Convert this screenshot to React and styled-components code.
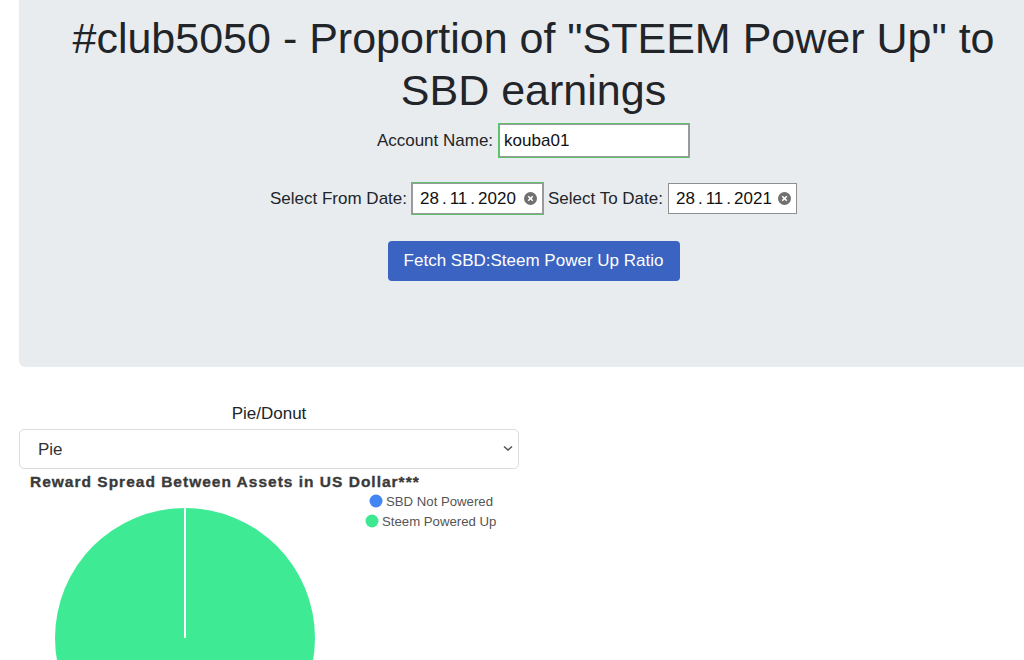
import React, { useState } from 'react';
import styled, { createGlobalStyle } from 'styled-components';

const GlobalStyle = createGlobalStyle`
  html, body {
    margin: 0;
    padding: 0;
    background: #fff;
    overflow: hidden;
  }
  body {
    font-family: "Liberation Sans", Arial, sans-serif;
    color: #212529;
  }
`;

const Root = styled.div`
  padding-left: 19px;
  width: 1024px;
  box-sizing: border-box;
  overflow: hidden;
`;

const Jumbotron = styled.div`
  width: 1029px;
  height: 367px;
  box-sizing: border-box;
  background: #e9ecef;
  border-radius: 0 0 6px 6px;
  padding-top: 12px;
  display: flex;
  flex-direction: column;
  align-items: center;
`;

const Title = styled.h1`
  margin: 0;
  width: 960px;
  font-size: 43px;
  font-weight: 400;
  line-height: 52px;
  text-align: center;
`;

const FormRow = styled.div`
  display: flex;
  align-items: center;
  gap: 5px;
  font-size: 17px;
  white-space: nowrap;
  margin-top: ${p => p.top}px;
`;

const TextInput = styled.input`
  width: 190px;
  height: 33px;
  box-sizing: border-box;
  border: 1px solid #9a9a9a;
  box-shadow: 0 0 0 1px #5cc36c;
  margin: 0 1px;
  padding: 0 4px;
  font-family: inherit;
  font-size: 17px;
  color: #111;
  outline: none;
`;

const DateBox = styled.div`
  width: ${p => p.w}px;
  height: 31px;
  box-sizing: border-box;
  background: #fff;
  border: 1px solid ${p => (p.active ? '#9a9a9a' : '#8f8f8f')};
  box-shadow: ${p => (p.active ? '0 0 0 1px #5cc36c' : 'none')};
  display: flex;
  align-items: center;
  justify-content: space-between;
  padding: 0 5px 0 7px;
  font-size: 17px;
  color: #111;
`;

const DateParts = styled.span`
  display: flex;
  gap: 3px;
`;

const ClearIcon = () => (
  <svg width="13" height="13" viewBox="0 0 13 13">
    <circle cx="6.5" cy="6.5" r="6.5" fill="#707070" />
    <path d="M4.2 4.2 L8.8 8.8 M8.8 4.2 L4.2 8.8" stroke="#fff" strokeWidth="1.6" />
  </svg>
);

const DateField = ({ value, w, active }) => (
  <DateBox w={w} active={active}>
    <DateParts>
      {value.split('.').map((part, i) => (
        <React.Fragment key={i}>
          {i > 0 && <span>.</span>}
          <span>{part}</span>
        </React.Fragment>
      ))}
    </DateParts>
    <ClearIcon />
  </DateBox>
);

const FetchButton = styled.button`
  margin-top: 27px;
  width: 292px;
  height: 40px;
  border: none;
  border-radius: 4px;
  background: #3a63c2;
  color: #fff;
  font-family: inherit;
  font-size: 17px;
  cursor: pointer;
`;

const ChartSection = styled.div`
  width: 500px;
  margin-top: 37px;
`;

const SelectLabel = styled.div`
  text-align: center;
  font-size: 17px;
  line-height: 20px;
`;

const SelectWrap = styled.div`
  position: relative;
  margin-top: 5px;
`;

const Select = styled.select`
  width: 500px;
  height: 40px;
  box-sizing: border-box;
  border: 1px solid #d9dce0;
  border-radius: 5px;
  background: #fff;
  appearance: none;
  padding: 0 18px;
  font-family: inherit;
  font-size: 17px;
  color: #333;
  outline: none;
`;

const Chevron = styled.svg`
  position: absolute;
  right: 6px;
  top: 16px;
  pointer-events: none;
`;

const ChartSvg = styled.svg`
  display: block;
  margin-top: 3px;
`;

const legend = [
  { label: 'SBD Not Powered', color: '#4285f4', x: 357, y: 29 },
  { label: 'Steem Powered Up', color: '#3ee893', x: 353, y: 49 },
];

export default function App() {
  const [account, setAccount] = useState('kouba01');
  const [chartType, setChartType] = useState('Pie');

  return (
    <Root>
      <GlobalStyle />
      <Jumbotron>
        <Title>#club5050 - Proportion of "STEEM Power Up" to SBD earnings</Title>
        <FormRow top={8}>
          Account Name:
          <TextInput value={account} onChange={e => setAccount(e.target.value)} />
        </FormRow>
        <FormRow top={26}>
          Select From Date:
          <DateField value="28.11.2020" w={131} active />
          Select To Date:
          <DateField value="28.11.2021" w={129} />
        </FormRow>
        <FetchButton>Fetch SBD:Steem Power Up Ratio</FetchButton>
      </Jumbotron>

      <ChartSection>
        <SelectLabel>Pie/Donut</SelectLabel>
        <SelectWrap>
          <Select value={chartType} onChange={e => setChartType(e.target.value)}>
            <option>Pie</option>
            <option>Donut</option>
          </Select>
          <Chevron width="10" height="7" viewBox="0 0 10 7">
            <path d="M1 1.5 L5 5 L9 1.5" stroke="#555" strokeWidth="1.6" fill="none" />
          </Chevron>
        </SelectWrap>
        <ChartSvg width="500" height="200" viewBox="0 0 500 200">
          <text
            x="11"
            y="15"
            fontFamily="Liberation Sans, Arial, sans-serif"
            fontSize="15.5"
            fontWeight="700"
            letterSpacing="1"
            fill="#3a3a3a"
            stroke="#3a3a3a"
            strokeWidth="0.35"
          >
            Reward Spread Between Assets in US Dollar***
          </text>
          {legend.map(item => (
            <g key={item.label}>
              <circle cx={item.x} cy={item.y} r="6.5" fill={item.color} />
              <text
                x={item.x + 10}
                y={item.y + 4.5}
                fontFamily="Liberation Sans, Arial, sans-serif"
                fontSize="13.2"
                fill="#555"
              >
                {item.label}
              </text>
            </g>
          ))}
          <circle cx="166" cy="166" r="130" fill="#3eeb94" />
          <line x1="166" y1="36" x2="166" y2="166" stroke="#fff" strokeWidth="2" />
        </ChartSvg>
      </ChartSection>
    </Root>
  );
}
